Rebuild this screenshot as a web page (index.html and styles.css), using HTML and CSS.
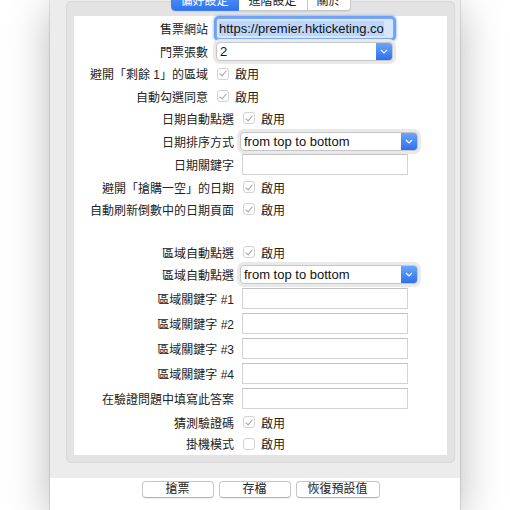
FILE: index.html
```html
<!DOCTYPE html>
<html lang="zh-Hant">
  <head>
    <meta charset="UTF-8" />
    <meta name="viewport" content="width=device-width, initial-scale=1.0" />
    <title>偏好設定</title>
    <link rel="stylesheet" href="styles.css">
  </head>
  <body>
    <div class="window">
      <div class="main">
        <div class="tabs">
          <div class="tab active">偏好設定</div>
          <div class="tab">進階設定</div>
          <div class="tab last">關於</div>
        </div>

        <div class="group">
          <div class="panel">
            <div class="row narrow h24">
              <div class="label">售票網站</div>
              <div class="field focus"><span class="sel">https://premier.hkticketing.co</span></div>
            </div>
            <div class="row narrow h22">
              <div class="label">門票張數</div>
              <div class="popup">
                <div class="popup-text">2</div>
                <div class="popup-btn">
                  <svg width="8" height="5" viewBox="0 0 8 5"><path d="M1 1l3 3 3-3" fill="none" stroke="#fff" stroke-width="1.2"/></svg>
                </div>
              </div>
            </div>
            <div class="row narrow h23">
              <div class="label">避開「剩餘 1」的區域</div>
              <div class="opt"><span class="check on"></span>啟用</div>
            </div>
            <div class="row narrow h22">
              <div class="label">自動勾選同意</div>
              <div class="opt"><span class="check on"></span>啟用</div>
            </div>

            <div class="row h22">
              <div class="label">日期自動點選</div>
              <div class="opt"><span class="check on"></span>啟用</div>
            </div>
            <div class="row h24">
              <div class="label">日期排序方式</div>
              <div class="popup wide">
                <div class="popup-text">from top to bottom</div>
                <div class="popup-btn">
                  <svg width="8" height="5" viewBox="0 0 8 5"><path d="M1 1l3 3 3-3" fill="none" stroke="#fff" stroke-width="1.2"/></svg>
                </div>
              </div>
            </div>
            <div class="row h23">
              <div class="label">日期關鍵字</div>
              <div class="field"></div>
            </div>
            <div class="row h22">
              <div class="label">避開「搶購一空」的日期</div>
              <div class="opt"><span class="check on"></span>啟用</div>
            </div>
            <div class="row h22">
              <div class="label">自動刷新倒數中的日期頁面</div>
              <div class="opt"><span class="check on"></span>啟用</div>
            </div>

            <div class="spacer"></div>

            <div class="row h22">
              <div class="label">區域自動點選</div>
              <div class="opt"><span class="check on"></span>啟用</div>
            </div>
            <div class="row h23">
              <div class="label">區域自動點選</div>
              <div class="popup wide">
                <div class="popup-text">from top to bottom</div>
                <div class="popup-btn">
                  <svg width="8" height="5" viewBox="0 0 8 5"><path d="M1 1l3 3 3-3" fill="none" stroke="#fff" stroke-width="1.2"/></svg>
                </div>
              </div>
            </div>
            <div class="row h25">
              <div class="label">區域關鍵字 #1</div>
              <div class="field"></div>
            </div>
            <div class="row h25">
              <div class="label">區域關鍵字 #2</div>
              <div class="field"></div>
            </div>
            <div class="row h25">
              <div class="label">區域關鍵字 #3</div>
              <div class="field"></div>
            </div>
            <div class="row h25">
              <div class="label">區域關鍵字 #4</div>
              <div class="field"></div>
            </div>
            <div class="row h25">
              <div class="label">在驗證問題中填寫此答案</div>
              <div class="field"></div>
            </div>
            <div class="row h22">
              <div class="label">猜測驗證碼</div>
              <div class="opt"><span class="check on"></span>啟用</div>
            </div>
            <div class="row h21">
              <div class="label">掛機模式</div>
              <div class="opt"><span class="check"></span>啟用</div>
            </div>
          </div>
        </div>
      </div>

      <div class="footer">
        <div class="btn">搶票</div>
        <div class="btn">存檔</div>
        <div class="btn long">恢復預設值</div>
      </div>
    </div>
  </body>
</html>
```

FILE: styles.css
```css
* {
  box-sizing: border-box;
  margin: 0;
  padding: 0;
}

body {
  background: #fff;
  font-family: "Liberation Sans", "Noto Sans CJK TC", sans-serif;
  font-size: 12px;
  color: #222;
  height: 510px;
  overflow: hidden;
}

.window {
  margin-left: 50px;
  width: 410px;
  height: 510px;
  background: #fff;
  box-shadow: 0 0 0 1px rgba(0, 0, 0, 0.1), 0 8px 40px rgba(0, 0, 0, 0.28);
}

.main {
  background: #ececec;
  padding: 1px 5px 15px 16px;
}

/* segmented tabs sit on the group box border */
.tabs {
  position: relative;
  z-index: 1;
  display: flex;
  justify-content: center;
  height: 21px;
  margin-top: -11px;
}

.tab {
  width: 69px;
  height: 21px;
  line-height: 21px;
  text-align: center;
  background: #fff;
  border: 1px solid #c9c9c9;
  border-left: none;
  box-shadow: 0 1px 1px rgba(0, 0, 0, 0.08);
}

.tab.active {
  width: 68px;
  border: 1px solid #3f7fef;
  border-radius: 4px 0 0 4px;
  background: linear-gradient(#5d9cf9, #2f72f0);
  color: #fff;
}

.tab.last {
  width: 43px;
  border-radius: 0 4px 4px 0;
}

.group {
  margin-top: -10px;
  background: #e3e3e3;
  border: 1px solid #d8d8d8;
  border-radius: 5px;
  padding: 14px 7px 7px 7px;
}

.panel {
  background: #fff;
  padding-bottom: 1px;
}

.row {
  display: grid;
  grid-template-columns: 160px 1fr;
  column-gap: 8px;
  align-items: center;
}

.row.narrow {
  grid-template-columns: 134px 1fr;
}

.h21 { height: 21px; }
.h22 { height: 22px; }
.h23 { height: 23px; }
.h24 { height: 24px; }
.h25 { height: 25px; }

.spacer {
  height: 21px;
}

.label {
  text-align: right;
  white-space: nowrap;
}

.field {
  width: 166px;
  height: 21px;
  background: #fff;
  border: 1px solid #d3d3d3;
  border-top-color: #c2c2c2;
}

.field.focus {
  width: 178px;
  border: 1px solid #7eaaf1;
  border-radius: 3px;
  box-shadow: 0 0 0 2px #6ea2f6, 0 0 2px 3px rgba(90, 145, 240, 0.45);
  padding: 1px 2px;
  font-size: 13px;
  line-height: 17px;
  color: #111;
  overflow: hidden;
  white-space: nowrap;
  background: #d6e6fc;
}

.sel {
  background: #bcd6fb;
}

.popup {
  display: flex;
  width: 177px;
  height: 19px;
  background: #fff;
  border: 1px solid #c6c6c6;
  border-radius: 4px;
  box-shadow: 0 0 0 3px #e9e9e9;
  overflow: hidden;
}

.popup.wide {
  width: 178px;
  margin-left: -2px;
}

.popup-text {
  flex: 1;
  padding-left: 3px;
  font-size: 13px;
  line-height: 18px;
  color: #111;
}

.popup-btn {
  width: 16px;
  display: flex;
  align-items: center;
  justify-content: center;
  background: linear-gradient(#6aa6f9, #2f6ff0);
}

.opt {
  display: flex;
  align-items: center;
  gap: 6px;
  margin-left: 1px;
}

.check {
  width: 12px;
  height: 12px;
  border: 1px solid #d2d2d2;
  border-radius: 3px;
  background: #fff;
  display: flex;
  align-items: center;
  justify-content: center;
}

.check.on::after {
  content: "";
  width: 3px;
  height: 6px;
  margin-top: -2px;
  border: solid #a3a3a3;
  border-width: 0 1px 1px 0;
  transform: rotate(40deg);
}

.footer {
  display: flex;
  justify-content: center;
  gap: 5px;
  padding: 3px 5px 0 16px;
}

.btn {
  width: 72px;
  height: 17px;
  line-height: 15px;
  text-align: center;
  background: #fff;
  border: 1px solid #c6c6c6;
  border-bottom-color: #b3b3b3;
  border-radius: 4px;
  box-shadow: 0 1px 1px rgba(0, 0, 0, 0.06);
}

.btn.long {
  width: 84px;
}
```
